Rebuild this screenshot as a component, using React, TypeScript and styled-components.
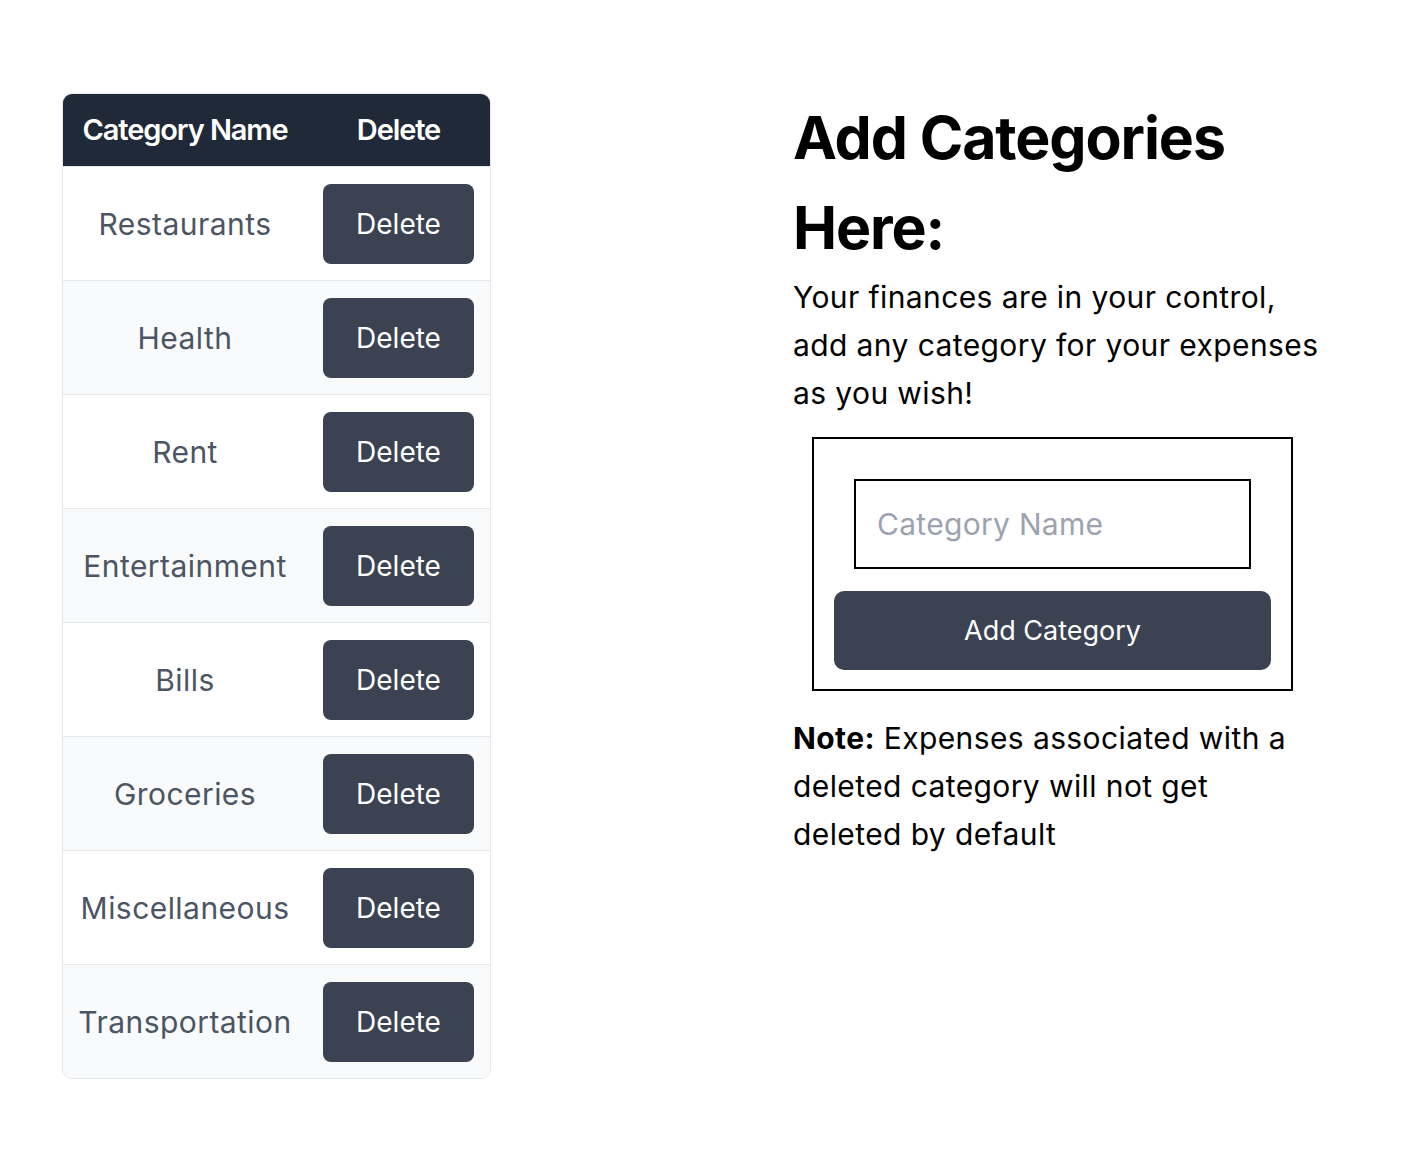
import React from "react";
import styled, { createGlobalStyle } from "styled-components";

const Global = createGlobalStyle`
  html, body { margin: 0; padding: 0; background: #ffffff; }
  body { font-family: Inter, "Noto Sans", sans-serif; color: #000; }
  * { box-sizing: border-box; }
`;

const Page = styled.div`
  display: flex;
  align-items: flex-start;
  padding: 93px 0 0 62px;
  gap: 302px;
`;

const TableWrap = styled.div`
  width: 429px;
  border: 1px solid #e5e7eb;
  border-radius: 10px;
  overflow: hidden;
`;

const Table = styled.table`
  width: 100%;
  border-collapse: collapse;
  font-size: 30px;
`;

const HeadCell = styled.th<{ $w?: number }>`
  background: #1f2937;
  color: #ffffff;
  font-weight: 600;
  font-size: 29px;
  letter-spacing: -1.1px;
  height: 72px;
  padding: 0;
  text-align: center;
  white-space: nowrap;
  ${(p) => (p.$w ? `width: ${p.$w}px;` : "")}
`;

const Row = styled.tr<{ $alt: boolean }>`
  background: ${(p) => (p.$alt ? "#f9fafb" : "#ffffff")};
  border-top: 1px solid #e5e7eb;
`;

const NameCell = styled.td`
  color: #4b5563;
  text-align: center;
  padding: 17px 0 16px;
  letter-spacing: 0.45px;
  white-space: nowrap;
`;

const BtnCell = styled.td`
  padding: 17px 16px 16px;
  text-align: center;
`;

const DeleteButton = styled.button`
  width: 151px;
  height: 80px;
  border: none;
  border-radius: 8px;
  background: #3b4252;
  color: #ffffff;
  font-family: inherit;
  font-size: 28px;
  display: block;
`;

const Side = styled.div`
  width: 530px;
  display: flex;
  flex-direction: column;
`;

const Title = styled.h1`
  margin: 0;
  font-size: 59px;
  line-height: 90px;
  font-weight: 700;
  letter-spacing: -1.1px;
`;

const Text = styled.p`
  margin: 0;
  font-size: 30px;
  line-height: 48px;
  letter-spacing: 0.4px;
`;

const FormBox = styled.form`
  align-self: flex-start;
  margin: 20px 0 23px 19px;
  width: 481px;
  border: 2px solid #000;
  padding: 40px 20px 19px;
  display: flex;
  flex-direction: column;
  align-items: center;
  gap: 22px;
`;

const Input = styled.input`
  width: 397px;
  height: 90px;
  border: 2px solid #000;
  padding: 0 21px;
  font-family: inherit;
  font-size: 30px;
  letter-spacing: 0.3px;
  outline: none;
  &::placeholder { color: #9ca3af; }
`;

const AddButton = styled.button`
  width: 100%;
  height: 79px;
  border: none;
  border-radius: 10px;
  background: #3b4252;
  color: #fff;
  font-family: inherit;
  font-size: 27px;
`;

const categories = [
  "Restaurants",
  "Health",
  "Rent",
  "Entertainment",
  "Bills",
  "Groceries",
  "Miscellaneous",
  "Transportation",
];

export default function App() {
  return (
    <>
      <Global />
      <Page>
        <TableWrap>
          <Table>
            <thead>
              <tr>
                <HeadCell $w={245}>Category Name</HeadCell>
                <HeadCell>Delete</HeadCell>
              </tr>
            </thead>
            <tbody>
              {categories.map((c, i) => (
                <Row key={c} $alt={i % 2 === 1}>
                  <NameCell>{c}</NameCell>
                  <BtnCell>
                    <DeleteButton type="button">Delete</DeleteButton>
                  </BtnCell>
                </Row>
              ))}
            </tbody>
          </Table>
        </TableWrap>
        <Side>
          <Title>Add Categories Here:</Title>
          <Text>
            Your finances are in your control, add any category for your expenses as you wish!
          </Text>
          <FormBox onSubmit={(e) => e.preventDefault()}>
            <Input placeholder="Category Name" />
            <AddButton type="submit">Add Category</AddButton>
          </FormBox>
          <Text>
            <b>Note:</b> Expenses associated with a deleted category will not get deleted by default
          </Text>
        </Side>
      </Page>
    </>
  );
}
